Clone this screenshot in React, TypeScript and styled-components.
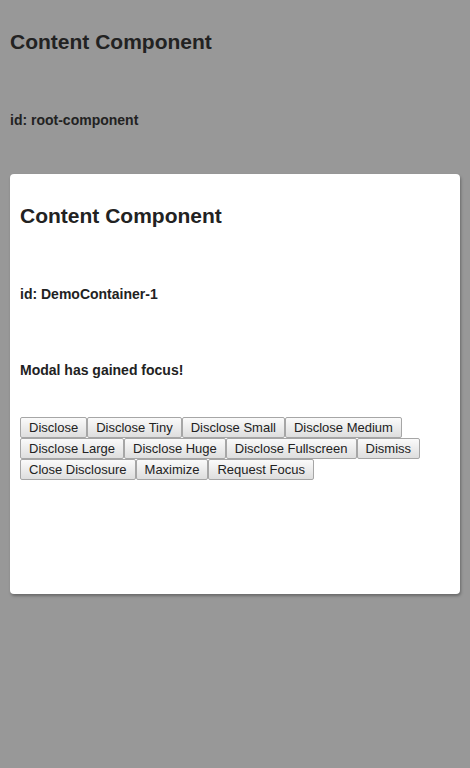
import styled, { createGlobalStyle } from 'styled-components'

const GlobalStyle = createGlobalStyle`
  html, body {
    margin: 0;
    padding: 0;
    background: #989898;
    font-family: 'Liberation Sans', Arial, sans-serif;
    color: #222;
  }
`

const Page = styled.div`
  min-height: 768px;
  padding: 10px;
  box-sizing: border-box;
`

const Title = styled.h2`
  font-size: 21px;
  line-height: 24px;
  font-weight: bold;
  margin: 20px 0 58px;
`

const IdText = styled.p`
  font-size: 14px;
  line-height: 16px;
  font-weight: bold;
  margin: 0 0 ${(p: { $after: number }) => p.$after}px;
`

const Card = styled.div`
  background: #fff;
  border-radius: 4px;
  box-shadow: 1px 2px 3px rgba(0, 0, 0, 0.3);
  padding: 10px 10px 114px;
`

const Buttons = styled.div`
  display: flex;
  flex-wrap: wrap;
`

const Button = styled.button`
  font-family: 'Liberation Sans', Arial, sans-serif;
  font-size: 13px;
  line-height: 15px;
  height: 21px;
  padding: 2px 8px;
  margin: 0;
  color: #222;
  border: 1px solid #a6a6a6;
  border-radius: 2px;
  background: linear-gradient(#fafafa, #dedede);
  cursor: pointer;
`

const labels = [
  'Disclose',
  'Disclose Tiny',
  'Disclose Small',
  'Disclose Medium',
  'Disclose Large',
  'Disclose Huge',
  'Disclose Fullscreen',
  'Dismiss',
  'Close Disclosure',
  'Maximize',
  'Request Focus',
]

const App = () => {
  return (
    <Page>
      <GlobalStyle />
      <Title>Content Component</Title>
      <IdText $after={46}>id: root-component</IdText>
      <Card>
        <Title>Content Component</Title>
        <IdText $after={60}>id: DemoContainer-1</IdText>
        <IdText $after={39}>Modal has gained focus!</IdText>
        <Buttons>
          {labels.map((l) => (
            <Button key={l}>{l}</Button>
          ))}
        </Buttons>
      </Card>
    </Page>
  )
}

export default App
